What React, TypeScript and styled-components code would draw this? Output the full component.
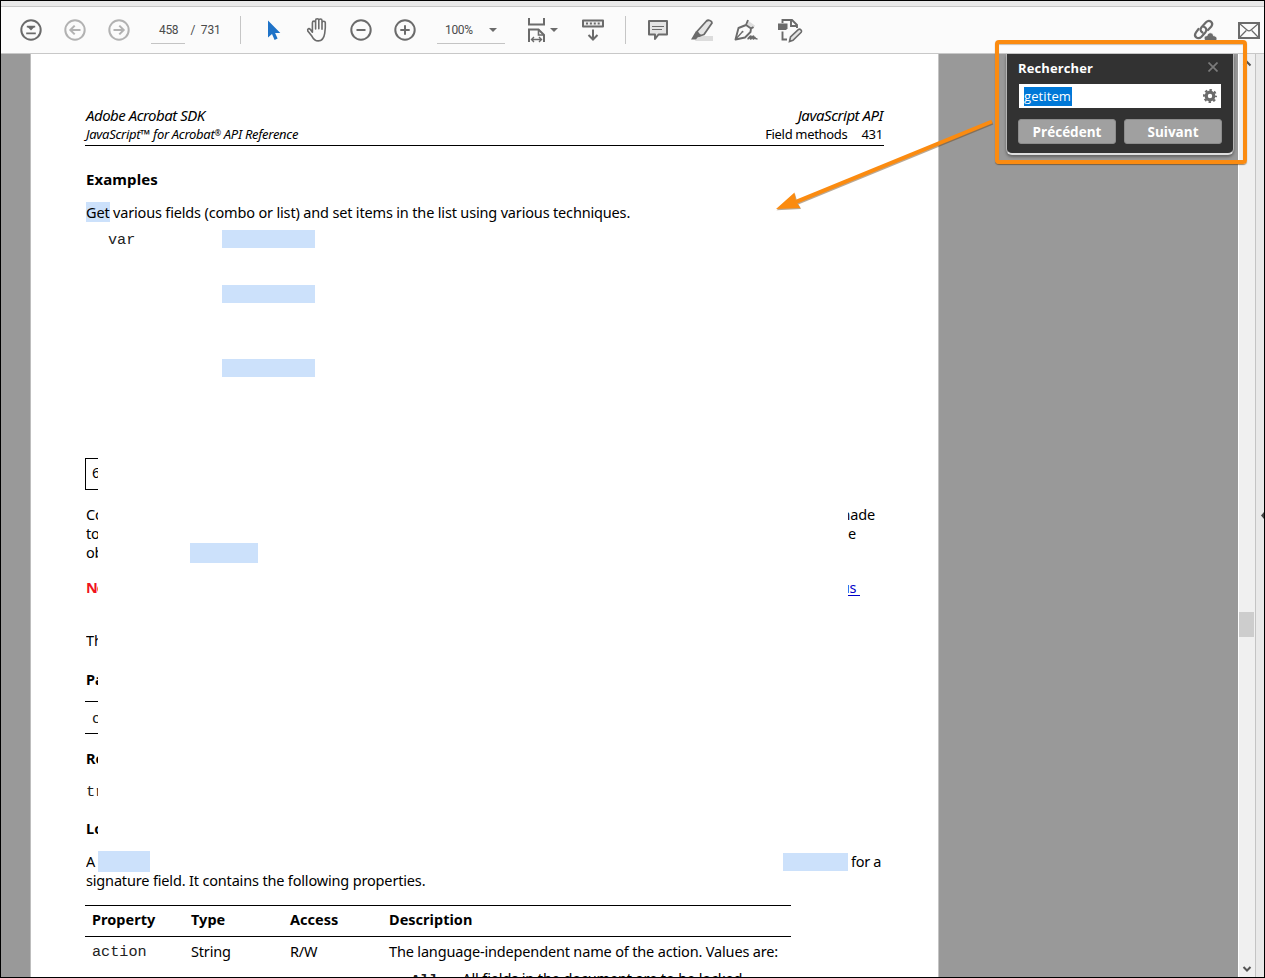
import React from 'react';
import styled, { createGlobalStyle, css } from 'styled-components';

const Global = createGlobalStyle`
  * { box-sizing: border-box; }
  body { margin: 0; overflow: hidden; }
`;

const ink = '#6b6b6b';

const Window = styled.div`
  position: relative;
  width: 1265px;
  height: 978px;
  border: 1px solid #000;
  display: flex;
  flex-direction: column;
  overflow: hidden;
  background: #999;
  font-family: 'Noto Sans', 'Open Sans', sans-serif;
  color: #000;
`;

const TitleStrip = styled.div`
  height: 6px;
  flex: none;
  background: #e9e9e9;
  border-bottom: 1px solid #c6c6c6;
`;

const Toolbar = styled.div`
  height: 47px;
  flex: none;
  display: flex;
  align-items: center;
  padding-left: 8px;
  background: #fbfbfb;
  border-bottom: 1px solid #c8c8c8;
`;

const ToolButton = styled.div<{ $w?: number }>`
  width: ${(p) => p.$w ?? 44}px;
  height: 46px;
  flex: none;
  display: flex;
  align-items: center;
  justify-content: center;
  svg { display: block; overflow: visible; flex: none; }
`;

const Divider = styled.div<{ $ml: number; $mr: number }>`
  width: 1px;
  height: 28px;
  margin: 0 ${(p) => p.$mr}px 0 ${(p) => p.$ml}px;
  background: #c6c6c6;
`;

const ToolText = styled.span<{ $ls?: number }>`
  font-family: Roboto, sans-serif;
  font-size: 12px;
  line-height: 28px;
  letter-spacing: ${(p) => p.$ls ?? -0.35}px;
  color: #4b4b4b;
  white-space: pre;
`;

const Field = styled.div<{ $w: number; $ml: number }>`
  width: ${(p) => p.$w}px;
  margin-left: ${(p) => p.$ml}px;
  height: 28px;
  flex: none;
  display: flex;
  align-items: center;
  padding-left: 8px;
  border-bottom: 1px solid #c4c4c4;
`;

const Caret = styled.span<{ $ml: number }>`
  margin-left: ${(p) => p.$ml}px;
  border: 4px solid transparent;
  border-top: 4px solid ${ink};
  border-bottom: 0;
`;

const Spacer = styled.div`flex: 1;`;

const Workspace = styled.div`
  flex: 1;
  min-height: 0;
  display: flex;
`;

const Page = styled.div`
  width: 909px;
  margin-left: 29px;
  flex: none;
  overflow: hidden;
  padding: 52px 55px 0 55px;
  background: #fff;
  border-left: 1px solid #bdbdbd;
  border-right: 1px solid #c4c4c4;
`;

const ScrollTrack = styled.div`
  width: 17px;
  margin-left: auto;
  display: flex;
  flex-direction: column;
  align-items: center;
  background: #f0f0f0;
  border-left: 1px solid #fff;
`;
const Thumb = styled.div`
  width: 15px;
  height: 25px;
  margin-top: 543px;
  align-self: flex-start;
  background: #cdcdcd;
`;
const SidePane = styled.div`
  width: 9px;
  background: #e9e9e9;
  border-left: 1px solid #c4c4c4;
  padding: 457px 0 0 5px;
  svg { display: block; }
`;

const Line = styled.div<{ $mt?: number; $h?: number }>`
  display: flex;
  align-items: center;
  height: ${(p) => p.$h ?? 19}px;
  margin-top: ${(p) => p.$mt ?? 0}px;
`;

const T = styled.span<{ $ls?: number; $size?: number; $i?: boolean; $b?: boolean; $ml?: number }>`
  flex: none;
  font-size: ${(p) => p.$size ?? 14.5}px;
  line-height: 19px;
  letter-spacing: ${(p) => p.$ls ?? (p.$b ? 0.02 : -0.165)}px;
  white-space: pre;
  margin-left: ${(p) => p.$ml ?? 0}px;
  ${(p) => p.$i && css`font-style: italic;`}
  ${(p) => p.$b && css`font-weight: 700;`}
`;

const Reg = styled.span`
  font-size: 8px;
  line-height: 0;
  vertical-align: 3px;
`;

const Mono = styled.span<{ $ml?: number; $b?: boolean }>`
  font-family: 'Liberation Mono', monospace;
  font-size: 15.2px;
  line-height: 19px;
  padding-top: ${(p) => (p.$b ? 6 : 3)}px;
  color: #222;
  margin-left: ${(p) => p.$ml ?? 0}px;
  font-weight: ${(p) => (p.$b ? 700 : 400)};
`;

const Rule = styled.div<{ $w?: number; $mt?: number }>`
  height: 1px;
  width: ${(p) => p.$w ?? 799}px;
  margin: ${(p) => p.$mt ?? 0}px 0 0 -1px;
  background: #000;
`;

const Mark = styled.span<{ $w: number; $h: number; $ml?: number }>`
  flex: none;
  width: ${(p) => p.$w}px;
  height: ${(p) => p.$h}px;
  margin-left: ${(p) => p.$ml ?? 0}px;
  background: #cce1fb;
`;

const Hit = styled.span`
  display: flex;
  align-items: center;
  background: #cce1fb;
  height: 20px;
  width: 24px;
  flex: none;
`;

const Clip = styled.div<{ $mb?: number }>`
  width: 12px;
  flex: none;
  overflow: hidden;
  display: flex;
  white-space: pre;
  margin-bottom: ${(p) => p.$mb ?? 0}px;
`;

const ClipEnd = styled.div<{ $pad: number }>`
  width: 35px;
  flex: none;
  overflow: hidden;
  display: flex;
  justify-content: flex-end;
  margin-left: auto;
  padding-right: ${(p) => p.$pad}px;
`;

const NoteBox = styled.div`
  width: 13px;
  height: 32px;
  margin: 81px 0 0 -1px;
  padding: 4px 0 0 6px;
  display: flex;
  align-items: flex-start;
  overflow: hidden;
  border: 1px solid #000;
  border-right: 0;
`;

const Red = styled(T)`color: #f0141e;`;
const Link = styled(T)`
  color: #0000c8;
  text-decoration: underline;
  text-underline-offset: 2px;
`;

const TableRow = styled.div<{ $mt: number; $h?: number }>`
  display: grid;
  grid-template-columns: 99px 99px 99px auto;
  justify-content: start;
  align-items: center;
  height: ${(p) => p.$h ?? 20}px;
  margin-top: ${(p) => p.$mt}px;
  padding-left: 6px;
`;

const SearchPanel = styled.div`
  position: absolute;
  left: 1005px;
  top: 53px;
  width: 228px;
  height: 101px;
  padding: 4px 11px 0 11px;
  background: #323232;
  border-style: solid;
  border-width: 0 1px 2px 1px;
  border-color: #aaa #b5b5b5 #dedede #b5b5b5;
  border-radius: 0 0 6px 6px;
  box-shadow: 0 2px 3px rgba(0, 0, 0, 0.35);
`;
const SearchHead = styled.div`
  display: flex;
  justify-content: space-between;
  align-items: center;
  height: 20px;
  color: #fff;
  font: 700 13px/20px 'Open Sans', sans-serif;
  letter-spacing: 0.12px;
  padding-right: 4px;
  svg { margin-bottom: 2px; }
`;
const SearchField = styled.div`
  display: flex;
  align-items: center;
  justify-content: space-between;
  height: 24px;
  width: 202px;
  margin-top: 6px;
  margin-left: 1px;
  padding: 0 4px 0 5px;
  background: #fff;
`;
const Selected = styled.span`
  height: 19px;
  width: 48px;
  background: #0078d7;
  color: #fff;
  font: 400 13px/18px 'Open Sans', sans-serif;
  letter-spacing: 0.1px;
`;
const SearchButtons = styled.div`
  display: flex;
  gap: 8px;
  margin-top: 11px;
`;
const SearchButton = styled.div`
  width: 98px;
  height: 25px;
  border-radius: 3px;
  background: #a0a0a0;
  border: 1px solid #8c8c8c;
  color: #fff;
  text-align: center;
  font: 700 13.5px/24px 'Open Sans', sans-serif;
`;

const Frame = styled.div`
  position: absolute;
  left: 994px;
  top: 39px;
  width: 252px;
  height: 124px;
  border: 4px solid #fb8b10;
  border-radius: 4px;
  box-shadow: 0 1px 1px rgba(90, 50, 0, 0.55), inset 0 1px 1px rgba(90, 50, 0, 0.3);
`;
const Arrow = styled.svg`
  position: absolute;
  left: 769px;
  top: 109px;
`;

const Ring = ({ c = ink, children }: { c?: string; children: React.ReactNode }) => (
  <svg width="22" height="22" viewBox="0 0 22 22" fill="none" stroke={c} strokeWidth="2">
    <circle cx="11" cy="11" r="9.7" />
    {children}
  </svg>
);

export default function App() {
  return (
    <>
      <Global />
      <Window>
        <TitleStrip />
        <Toolbar>
          <ToolButton>
            <Ring><path d="M7 7.3h8l-4 4.2z" fill={ink} stroke="none" /><path d="M6.8 7.6h8.4M6.2 14.4h9.6" strokeWidth="1.7" /></Ring>
          </ToolButton>
          <ToolButton>
            <Ring c="#b2b2b2"><path d="M16.5 11H6.5M10.7 6.6L6.3 11l4.4 4.4" /></Ring>
          </ToolButton>
          <ToolButton>
            <Ring c="#b2b2b2"><path d="M5.5 11h10M11.3 6.6l4.4 4.4-4.4 4.4" /></Ring>
          </ToolButton>
          <Field $w={34} $ml={10}><ToolText>458</ToolText></Field>
          <ToolButton $w={41}><ToolText $ls={-0.2}>{'/  731'}</ToolText></ToolButton>
          <Divider $ml={14} $mr={11} />
          <ToolButton $w={43}>
            <svg width="14" height="21" viewBox="0 0 14 21"><path d="M1 0.5v17l4-3.6 2.6 6 3-1.3-2.5-5.7h5.2z" fill="#1f73c8" /></svg>
          </ToolButton>
          <ToolButton>
            <svg width="24" height="24" viewBox="0 0 24 24" fill="none" stroke={ink} strokeWidth="1.6" strokeLinecap="round" strokeLinejoin="round">
              <path d="M6.2 14.5V5a1.6 1.6 0 0 1 3.2 0v6.3M9.4 11V2.7a1.6 1.6 0 0 1 3.2 0V11M12.6 11V2.9a1.6 1.6 0 0 1 3.2 0v8.6M15.8 11.5V5.2a1.6 1.6 0 0 1 3.3 0c.2 4 0 7-.6 10.5C17.8 20.5 16 23.2 12 23.2c-3.5 0-4.8-1.7-6.2-4.6L1.6 13.2c-.7-2.2 1.3-3 2.6-1.4l2 2.7" transform="translate(1.2 -.3)" />
            </svg>
          </ToolButton>
          <ToolButton><Ring><path d="M6.5 11h9" /></Ring></ToolButton>
          <ToolButton><Ring><path d="M6.3 11h9.4M11 6.3v9.4" /></Ring></ToolButton>
          <Field $w={68} $ml={10}><ToolText>100%</ToolText><Caret $ml={16} /></Field>
          <ToolButton $w={75}>
            <svg width="19" height="24" viewBox="0 0 19 24" fill="none" stroke={ink} strokeWidth="2">
              <path d="M2 0v6.5h15V0M2 24V11.500h9.500L17 17v7" />
              <path d="M11.5 11.500V17H17" strokeWidth="1.6" />
              <path d="M4.7 21.500h9.600M7 19l-2.500 2.500L7 24M12 19l2.500 2.500L12 24" strokeWidth="1.4" />
            </svg>
            <Caret $ml={4} />
          </ToolButton>
          <ToolButton $w={26}>
            <svg width="22" height="22" viewBox="0 0 22 22" fill="none" stroke={ink} strokeWidth="2">
              <path d="M1 1.500h20v6H1z" strokeLinejoin="round" fill="#eee" />
              <path d="M4 4.500h14" strokeDasharray="2 1.9" />
              <path d="M11 10.500v9.500M6.500 16l4.500 4.500 4.500-4.500" />
            </svg>
          </ToolButton>
          <Divider $ml={19} $mr={10} />
          <ToolButton>
            <svg width="20" height="21" viewBox="0 0 20 21" fill="#e4e4e4" stroke={ink} strokeWidth="2" strokeLinejoin="round">
              <path d="M1 1h18v13.500h-8.500L7 19v-4.500H1z" /><path d="M4 6.500h12M4 9.500h10" strokeWidth="1" />
            </svg>
          </ToolButton>
          <ToolButton>
            <svg width="22" height="22" viewBox="0 0 22 22">
              <path d="M7 17h15v5H4z" fill="#dcdcdc" />
              <path d="M6 12.500L15.500 2c1.500-1.500 5.500-.5 5.500 2L13 15.500 8.500 17z" fill="#e4e4e4" stroke={ink} strokeWidth="1.8" strokeLinejoin="round" />
              <path d="M5 12l6 4.500-4.500 2L5 20.500H0z" fill={ink} />
            </svg>
          </ToolButton>
          <ToolButton>
            <svg width="24" height="22" viewBox="0 0 24 22" fill="none" stroke={ink} strokeWidth="1.9" strokeLinejoin="round">
              <path d="M14.500 2l6.500 4.500-2 4-6-4z" fill="#dedede" stroke="none" />
              <path d="M14 1l-2 5L4.500 9 1.500 20.500 11 18.500l5.500-5.500.5-3.500M12 6l5 3.500 2.500-1.500" />
              <path d="M1.800 20L8 13.200" strokeWidth="1.3" /><circle cx="8.5" cy="12.7" r="1" fill={ink} stroke="none" />
              <path d="M13.500 20c1.500-.5 2.500-3 3.300-3 .8 0-1 3 0 3s1.700-3 2.500-3-.8 3 .3 3l1.200-1.500c.4 1.300 1.200 1.500 2.700 1.500" strokeWidth="1.7" />
            </svg>
          </ToolButton>
          <ToolButton>
            <svg width="24" height="23" viewBox="0 0 24 23" fill="none" stroke={ink} strokeWidth="1.9">
              <path d="M4.500 4V1h9.500l5 5v3M4.500 12.500V20.500h4.500M13 1v6h6" />
              <path d="M0 4.500h9.500V9.500L8 11H0z" fill={ink} stroke="none" />
              <path d="M11.500 22.500l1-4.500 8-7.500c1.500-1 4 1 2.700 2.700L15 21.300z" fill="#e4e4e4" strokeWidth="1.6" />
            </svg>
          </ToolButton>
          <Spacer />
          <ToolButton $w={58}>
            <svg width="24" height="22" viewBox="0 0 24 22" fill="none" stroke={ink} strokeWidth="2.2" strokeLinecap="round">
              <path d="M9.500 13.500c-2.300-1.500-2.500-3.500-1-5.200l4.500-5c3.500-3.500 8 .5 5.300 4.200L15 11" />
              <path d="M10.700 7.800c2.500.8 3.500 3.200 1.800 5.400l-4 4.500c-3.700 3.500-8.500-.3-5.500-4.400L5.500 10" />
              <path d="M12 21.500c-2-3.300 0-5 2-4.700 1.200-4.200 6-3.700 6.500 0 2.700 0 4.500 2.400 3 4.700z" fill={ink} stroke="#fbfbfb" strokeWidth="0.8" />
            </svg>
          </ToolButton>
          <ToolButton $w={30}>
            <svg width="22" height="17" viewBox="0 0 22 17" fill="none" stroke={ink} strokeWidth="2">
              <path d="M1 1h20v15H1z" /><path d="M1.500 1.500L9 8c1.500 1.300 2.500 1.300 4 0l7.500-6.500M1.500 15.500l6.800-7M20.500 15.500l-6.800-7" strokeWidth="1.2" />
            </svg>
          </ToolButton>
        </Toolbar>

        <Workspace>
          <Page>
            <Line><T $i $size={15} $ls={-0.49}>Adobe Acrobat SDK</T><Spacer /><T $i $size={15} $ls={-0.46}>JavaScript API</T></Line>
            <Line><T $i $size={13} $ls={-0.3}>JavaScript™ for Acrobat<Reg>®</Reg> API Reference</T><Spacer /><T $size={13} $ls={-0.32}>Field methods</T><T $size={13} $ls={-0.25} $ml={14}>431</T></Line>
            <Rule $mt={1} />
            <Line $mt={23} $h={20}><T $b $size={15} $ls={0.1}>Examples</T></Line>
            <Line $mt={13} $h={20}><Hit><T>Get</T></Hit><T $ml={3}>various fields (combo or list) and set items in the list using various techniques.</T></Line>
            <Line $mt={8} $h={18}><Mono $ml={22}>var</Mono><Mark $w={93} $h={18} $ml={87} /></Line>
            <Line $mt={37} $h={18}><Mark $w={93} $h={18} $ml={136} /></Line>
            <Line $mt={56} $h={18}><Mark $w={93} $h={18} $ml={136} /></Line>
            <NoteBox><T>6</T></NoteBox>
            <Line $mt={15}><Clip><T>Co</T></Clip><ClipEnd $pad={8}><T>made</T></ClipEnd></Line>
            <Line><Clip><T>to</T></Clip><ClipEnd $pad={27}><T>e</T></ClipEnd></Line>
            <Line $h={20}><Clip $mb={1}><T>ob</T></Clip><Mark $w={68} $h={20} $ml={92} /></Line>
            <Line $mt={15}><Clip><Red $b $ls={-1}>No</Red></Clip><ClipEnd $pad={23}><Link>us </Link></ClipEnd></Line>
            <Line $mt={34}><Clip><T>Th</T></Clip></Line>
            <Line $mt={20}><Clip><T $b>Pa</T></Clip></Line>
            <Rule $w={13} $mt={12} />
            <Line $mt={6}><Clip><Mono $ml={6}>c</Mono></Clip></Line>
            <Rule $w={13} $mt={6} />
            <Line $mt={15}><Clip><T $b>Re</T></Clip></Line>
            <Line $mt={13}><Clip><Mono>tr</Mono></Clip></Line>
            <Line $mt={19}><Clip><T $b>Lo</T></Clip></Line>
            <Line $mt={13} $h={21}><Clip><T>A</T></Clip><Mark $w={52} $h={21} /><Mark $w={65} $h={18} $ml={633} /><T $ml={3} $ls={-0.3}>for a</T></Line>
            <Line $h={17}><T>signature field. It contains the following properties.</T></Line>
            <Rule $w={706} $mt={16} />
            <TableRow $mt={3}><T $b>Property</T><T $b>Type</T><T $b>Access</T><T $b>Description</T></TableRow>
            <Rule $w={706} $mt={7} />
            <TableRow $mt={3} $h={18}><Mono>action</Mono><T>String</T><T>R/W</T><T>The language-independent name of the action. Values are:</T></TableRow>
            <Line $mt={11}><Mono $b $ml={325}>All</Mono><T $ml={24} $ls={-0.13}>All fields in the document are to be locked.</T></Line>
          </Page>
          <ScrollTrack>
            <svg width="10" height="15" viewBox="0 0 10 15"><path d="M1.500 11.500L5 8l3.500 3.500" fill="none" stroke="#555" strokeWidth="2" /></svg>
            <Thumb />
            <Spacer />
            <svg width="10" height="14" viewBox="0 0 10 14"><path d="M1.500 4L5 7.500 8.500 4" fill="none" stroke="#555" strokeWidth="2" /></svg>
          </ScrollTrack>
          <SidePane><svg width="3" height="9" viewBox="0 0 3 9"><path d="M3 1v7L0 4.500z" fill="#444" /></svg></SidePane>
        </Workspace>

        <SearchPanel>
          <SearchHead>
            Rechercher
            <svg width="10" height="10" viewBox="0 0 10 10" stroke="#7b7b7b" strokeWidth="1.7"><path d="M.5.5l9 9M9.500.5l-9 9" /></svg>
          </SearchHead>
          <SearchField>
            <Selected>getitem</Selected>
            <svg width="14" height="14" viewBox="0 0 14 14" fill="none" stroke={ink}>
              <circle cx="7" cy="7" r="3.8" strokeWidth="3.2" />
              <circle cx="7" cy="7" r="5.9" strokeWidth="2.2" strokeDasharray="2.4 2.234" strokeDashoffset="1.2" />
            </svg>
          </SearchField>
          <SearchButtons><SearchButton>Précédent</SearchButton><SearchButton>Suivant</SearchButton></SearchButtons>
        </SearchPanel>
        <Frame />
        <Arrow width="226" height="106" viewBox="770 110 226 106">
          <g opacity=".45" transform="translate(.5 1.2)" fill="#6b4010" stroke="#6b4010">
            <path d="M992 121.500L797 201.500" strokeWidth="4" /><path d="M776 209L794.500 192.500l2.500 8.700 3.500 6.500z" stroke="none" />
          </g>
          <path d="M992 121.500L796 201.800" stroke="#fb8b10" strokeWidth="4" />
          <path d="M776 209L794.500 192.500l1.500 9 4.500 6.500z" fill="#fb8b10" />
        </Arrow>
      </Window>
    </>
  );
}
